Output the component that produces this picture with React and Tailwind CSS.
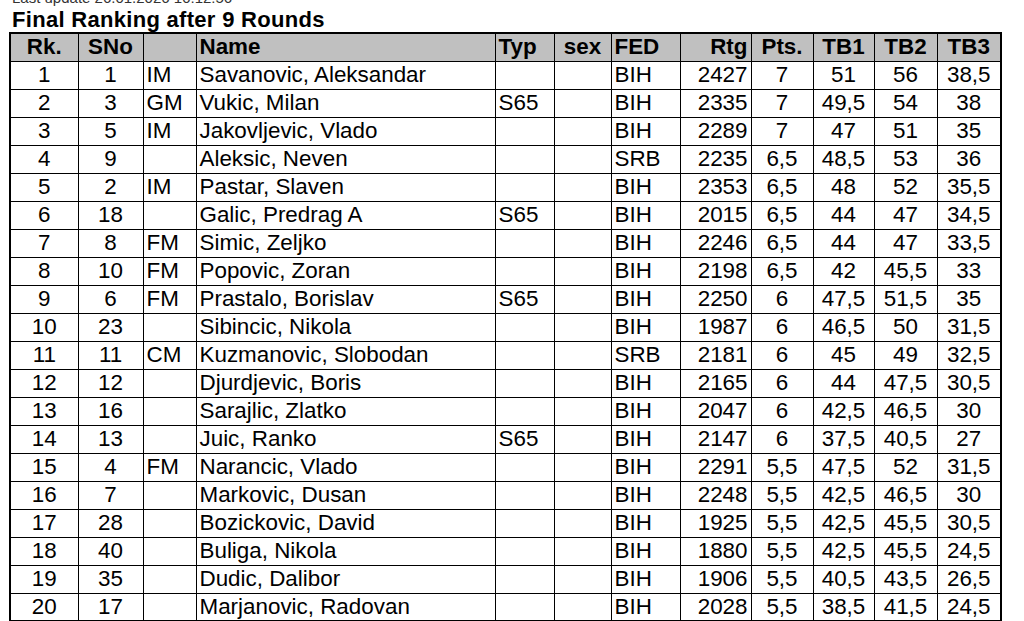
import React from "react";

const rows = [
  [1, 1, "IM", "Savanovic, Aleksandar", "", "", "BIH", 2427, "7", "51", "56", "38,5"],
  [2, 3, "GM", "Vukic, Milan", "S65", "", "BIH", 2335, "7", "49,5", "54", "38"],
  [3, 5, "IM", "Jakovljevic, Vlado", "", "", "BIH", 2289, "7", "47", "51", "35"],
  [4, 9, "", "Aleksic, Neven", "", "", "SRB", 2235, "6,5", "48,5", "53", "36"],
  [5, 2, "IM", "Pastar, Slaven", "", "", "BIH", 2353, "6,5", "48", "52", "35,5"],
  [6, 18, "", "Galic, Predrag A", "S65", "", "BIH", 2015, "6,5", "44", "47", "34,5"],
  [7, 8, "FM", "Simic, Zeljko", "", "", "BIH", 2246, "6,5", "44", "47", "33,5"],
  [8, 10, "FM", "Popovic, Zoran", "", "", "BIH", 2198, "6,5", "42", "45,5", "33"],
  [9, 6, "FM", "Prastalo, Borislav", "S65", "", "BIH", 2250, "6", "47,5", "51,5", "35"],
  [10, 23, "", "Sibincic, Nikola", "", "", "BIH", 1987, "6", "46,5", "50", "31,5"],
  [11, 11, "CM", "Kuzmanovic, Slobodan", "", "", "SRB", 2181, "6", "45", "49", "32,5"],
  [12, 12, "", "Djurdjevic, Boris", "", "", "BIH", 2165, "6", "44", "47,5", "30,5"],
  [13, 16, "", "Sarajlic, Zlatko", "", "", "BIH", 2047, "6", "42,5", "46,5", "30"],
  [14, 13, "", "Juic, Ranko", "S65", "", "BIH", 2147, "6", "37,5", "40,5", "27"],
  [15, 4, "FM", "Narancic, Vlado", "", "", "BIH", 2291, "5,5", "47,5", "52", "31,5"],
  [16, 7, "", "Markovic, Dusan", "", "", "BIH", 2248, "5,5", "42,5", "46,5", "30"],
  [17, 28, "", "Bozickovic, David", "", "", "BIH", 1925, "5,5", "42,5", "45,5", "30,5"],
  [18, 40, "", "Buliga, Nikola", "", "", "BIH", 1880, "5,5", "42,5", "45,5", "24,5"],
  [19, 35, "", "Dudic, Dalibor", "", "", "BIH", 1906, "5,5", "40,5", "43,5", "26,5"],
  [20, 17, "", "Marjanovic, Radovan", "", "", "BIH", 2028, "5,5", "38,5", "41,5", "24,5"],
];

const widths = [68, 65, 53, 299, 59, 57, 69, 71, 62, 61, 63, 64];
const aligns = [
  "text-center",
  "text-center",
  "text-left",
  "text-left",
  "text-left",
  "text-center",
  "text-left",
  "text-right",
  "text-center",
  "text-center",
  "text-center",
  "text-center",
];
const headers = ["Rk.", "SNo", "", "Name", "Typ", "sex", "FED", "Rtg", "Pts.", "TB1", "TB2", "TB3"];

export default function App() {
  return (
    <div
      className="w-[1024px] h-[621px] overflow-hidden bg-white text-black"
      style={{ fontFamily: '"Liberation Sans", Arial, sans-serif' }}
    >
      <div className="pl-[12px]">
        <div className="text-[15px] leading-[16px] text-[#333] mt-[-10px]">
          Last update 26.01.2026 10:12:56
        </div>
        <div className="text-[22px] font-bold leading-[24px] mt-[2px] tracking-[0.3px]">
          Final Ranking after 9 Rounds
        </div>
      </div>
      <div className="pl-[9px] mt-0">
        <table className="table-fixed border-collapse border-2 border-black w-[993px] text-[22.4px] leading-none">
          <colgroup>
            {widths.map((w, i) => (
              <col key={i} style={{ width: w }} />
            ))}
          </colgroup>
          <thead>
            <tr className="bg-[#c0c0c0] h-[28px] font-bold">
              {headers.map((h, i) => (
                <th
                  key={i}
                  className={`border border-black px-[3px] py-0 font-bold ${aligns[i]}`}
                >
                  {h}
                </th>
              ))}
            </tr>
          </thead>
          <tbody>
            {rows.map((r, ri) => (
              <tr key={ri} className="h-[28px]">
                {r.map((c, ci) => (
                  <td
                    key={ci}
                    className={`border border-black px-[3px] py-0 whitespace-nowrap ${aligns[ci]}`}
                  >
                    {c}
                  </td>
                ))}
              </tr>
            ))}
          </tbody>
        </table>
      </div>
    </div>
  );
}
